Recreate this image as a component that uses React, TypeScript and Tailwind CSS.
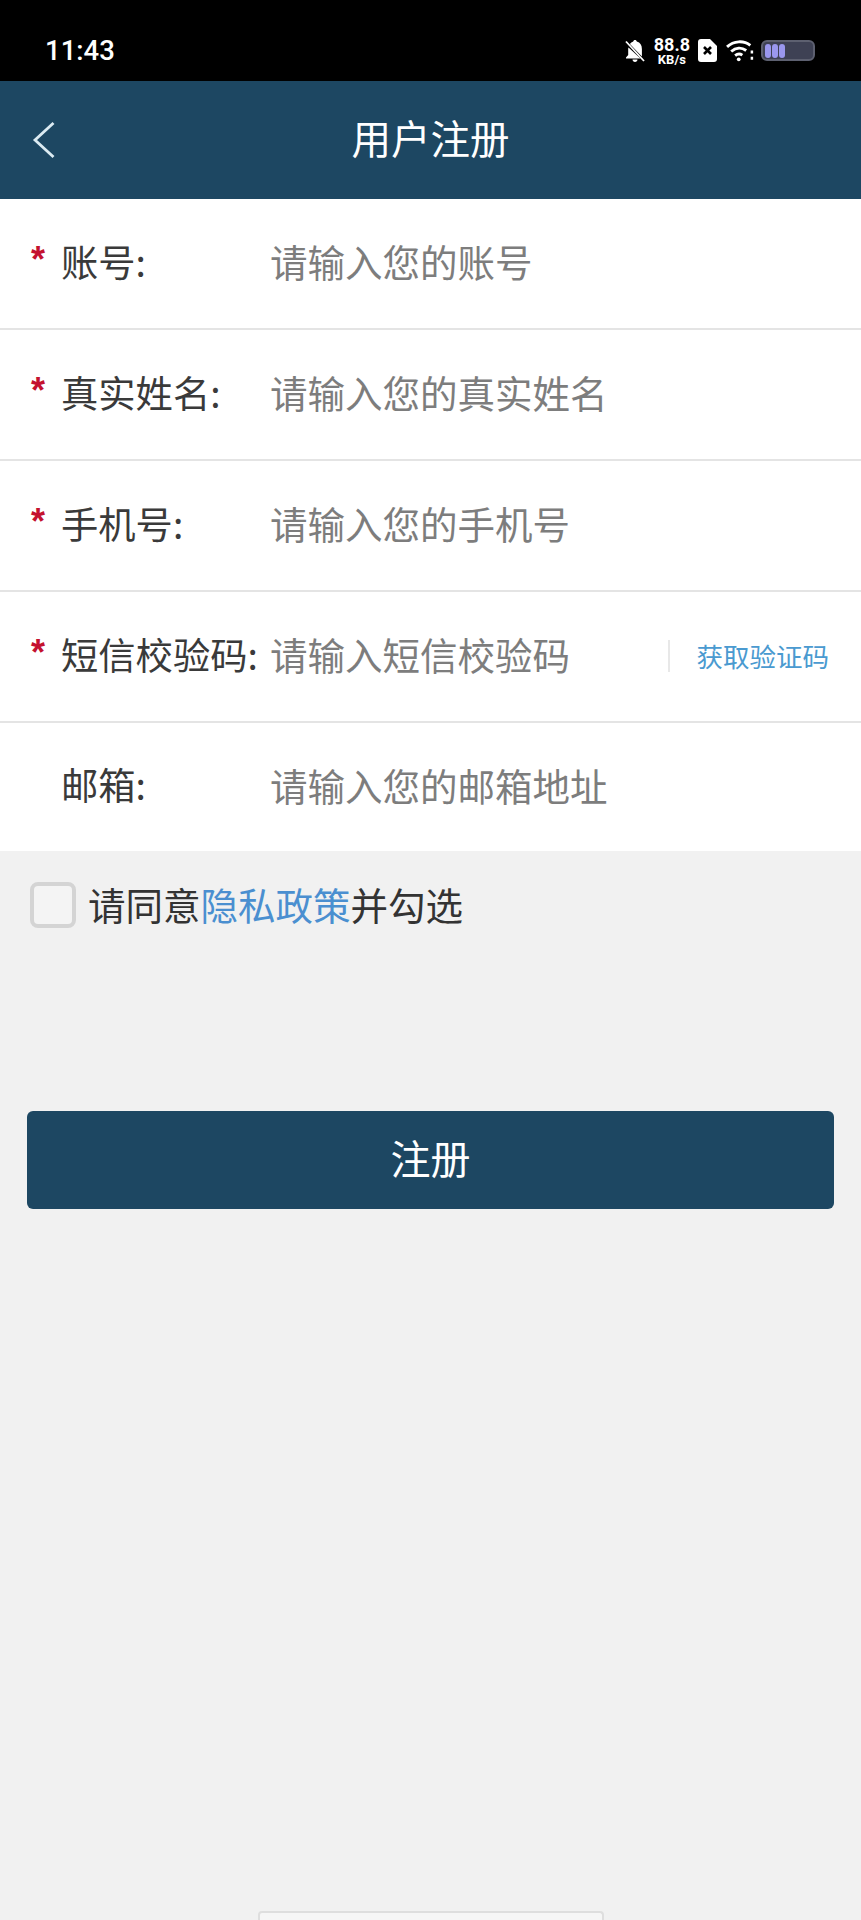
const fields = [
  { id: "account", label: "账号:", placeholder: "请输入您的账号", required: true },
  { id: "name", label: "真实姓名:", placeholder: "请输入您的真实姓名", required: true },
  { id: "phone", label: "手机号:", placeholder: "请输入您的手机号", required: true },
  { id: "code", label: "短信校验码:", placeholder: "请输入短信校验码", required: true, action: "获取验证码" },
  { id: "email", label: "邮箱:", placeholder: "请输入您的邮箱地址", required: false },
];

function StatusBar() {
  return (
    <div className="h-[81px] bg-black flex items-center justify-between pl-[45px] pr-[46px] pt-[20px] text-white">
      <span className="text-[27.500px] font-medium font-['Roboto',sans-serif] leading-none">11:43</span>
      <div className="flex items-center">
        {/* muted bell */}
        <svg width="22" height="24" viewBox="0 0 22 24" fill="white">
          <path d="M11 1c-1 0-1.600.7-1.800 1.600C7.800 3 6.700 3.800 5.900 5l12 12.500V10c0-3.600-1.600-6.400-5.100-7.400C12.600 1.700 12 1 11 1z" />
          <path d="M4.500 8.500C4.300 9 4.200 9.500 4.200 10v6L2 18.500v1h14.500z" />
          <path d="M8.500 20.500h5c0 1.400-1.100 2.500-2.500 2.500s-2.500-1.100-2.500-2.500z" />
          <path d="M2 2.500 20 22" stroke="white" strokeWidth="1.800" />
        </svg>
        <div className="ml-[8px] flex flex-col items-center font-['Roboto',sans-serif] font-bold leading-none">
          <span className="text-[18px] leading-[17px]">88.8</span>
          <span className="text-[13px] leading-[13px]">KB/s</span>
        </div>
        {/* sim card with x */}
        <svg className="ml-[8px]" width="19" height="23" viewBox="0 0 19 23">
          <path d="M3 0h9l7 7v13a3 3 0 0 1-3 3H3a3 3 0 0 1-3-3V3a3 3 0 0 1 3-3z" fill="white" />
          <path d="M6 8l7 7M13 8l-7 7" stroke="black" strokeWidth="2.600" />
        </svg>
        {/* wifi */}
        <svg className="ml-[9px]" width="29" height="23" viewBox="0 0 28 22" fill="none" stroke="white" strokeWidth="2.800">
          <path d="M1 7.500C7.500 1.500 17 1 23.500 6" />
          <path d="M5 12c4.500-4 10-4.300 14.500-1" />
          <path d="M8.800 16c2.200-1.800 4.900-1.900 7-.5" />
          <circle cx="12.300" cy="19.500" r="1.800" fill="white" stroke="none" />
          <path d="M25 11v3M25 17v3" strokeWidth="2.400" />
        </svg>
        {/* battery */}
        <div className="ml-[6px] w-[54px] h-[21px] rounded-[6px] bg-[#3e4154] border-[2px] border-[#5d6070] flex items-center gap-[1px] pl-[2px]">
          <span className="w-[6px] h-[14px] rounded-[3px] bg-[#9a97ee]" />
          <span className="w-[6px] h-[14px] rounded-[3px] bg-[#9a97ee]" />
          <span className="w-[6px] h-[14px] rounded-[3px] bg-[#9a97ee]" />
        </div>
      </div>
    </div>
  );
}

function Header() {
  return (
    <div className="relative h-[118px] bg-[#1d4762] flex items-center justify-center pb-[6px]">
      <svg className="absolute left-[32px] top-[40px]" width="24" height="38" viewBox="0 0 24 38" fill="none">
        <path d="M21.500 2 3 19l18.500 17" stroke="#dcebf2" strokeWidth="2.800" />
      </svg>
      <span className="text-[39.500px] text-white">用户注册</span>
    </div>
  );
}

function FieldRow({ field }: { field: (typeof fields)[number] }) {
  return (
    <div className="h-[131px] last:h-[128px] flex items-center bg-white border-b-[2px] border-[#e4e4e4] last:border-b-0 pr-[30px] pb-[4px]">
      <span className="w-[61px] pl-[31px] h-[30px] text-[36px] leading-[25px] text-[#c4122f] font-['Liberation_Sans',sans-serif] font-bold">
        {field.required ? "*" : ""}
      </span>
      <span className="w-[209px] text-[37.300px] text-[#3a3a3a] whitespace-nowrap">{field.label}</span>
      <span className="flex-1 text-[37.500px] text-[#7d7d7d] whitespace-nowrap">{field.placeholder}</span>
      {field.action && (
        <span className="border-l-[2px] border-[#e8e8e8] h-[32px] mt-[2px] pl-[27px] mr-[2px] flex items-center text-[26.500px] text-[#4a9ad0] whitespace-nowrap">
          {field.action}
        </span>
      )}
    </div>
  );
}

export default function App() {
  return (
    <div className="w-[861px] h-[1920px] relative overflow-hidden bg-[#f1f1f1] font-['Noto_Sans_CJK_SC','Noto_Sans',sans-serif]">
      <StatusBar />
      <Header />
      <div>
        {fields.map((field) => (
          <FieldRow key={field.id} field={field} />
        ))}
      </div>
      <div className="flex items-center pl-[30px] pt-[31px]">
        <span className="w-[46px] h-[46px] rounded-[8px] border-[4px] border-[#d4d4d4] bg-[#f4f4f4]" />
        <span className="ml-[12px] pb-[2px] text-[37.500px] text-[#333] leading-[44px]">
          请同意<span className="text-[#4a8fd0]">隐私政策</span>并勾选
        </span>
      </div>
      <div className="mx-[27px] mt-[183px] h-[98px] rounded-[6px] bg-[#1d4762] flex items-center justify-center pb-[6px] text-[40px] text-white">
        注册
      </div>
      <div className="absolute left-[258px] top-[1911px] w-[346px] h-[9px] rounded-t-[4px] border-[2px] border-b-0 border-[#dedede] bg-[#f6f6f6]" />
    </div>
  );
}
